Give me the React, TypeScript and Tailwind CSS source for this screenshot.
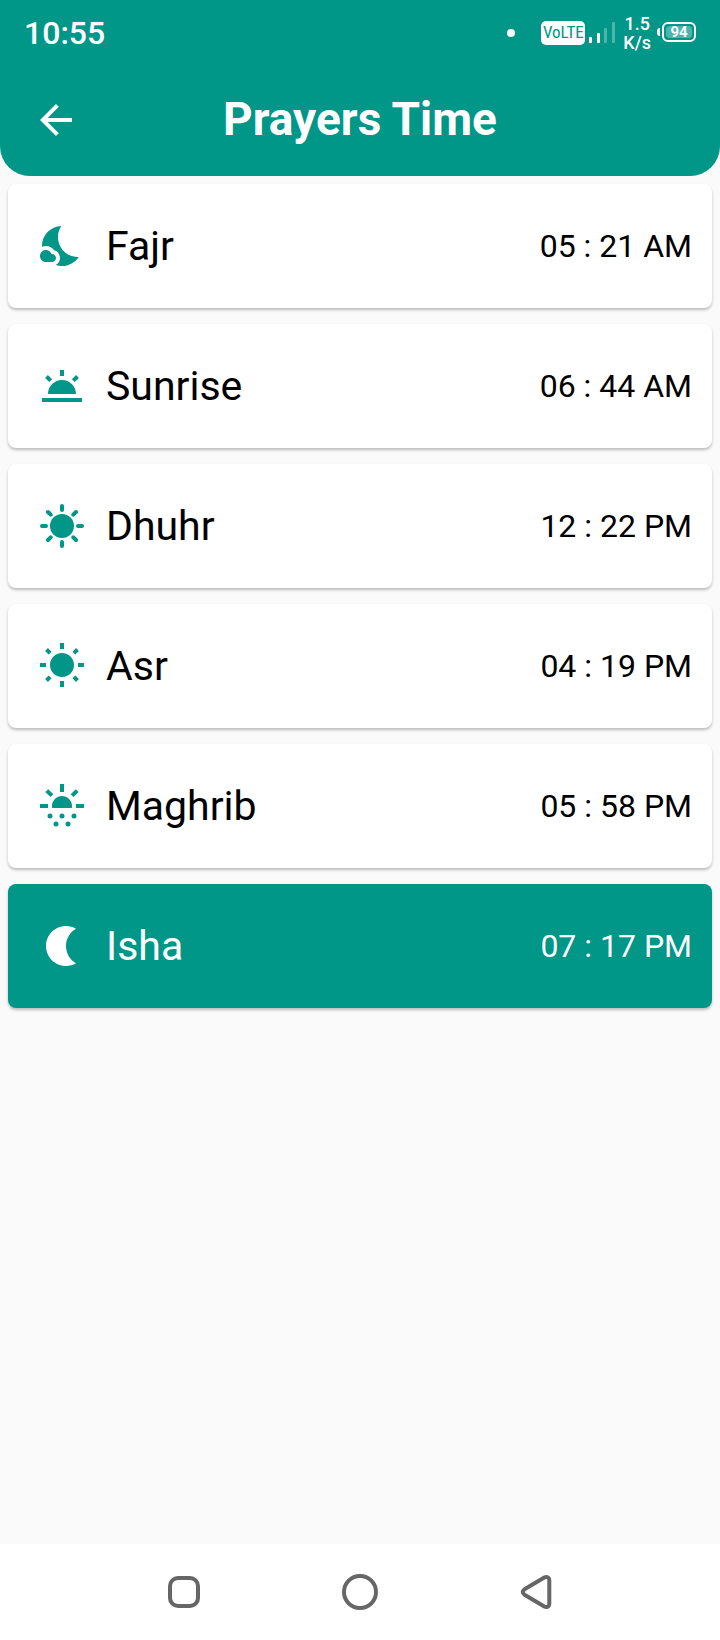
import type { ReactNode } from "react";

type Prayer = { name: string; time: string; icon: ReactNode; active?: boolean };

function Icon({ children }: { children: ReactNode }) {
  return (
    <svg viewBox="0 0 24 24" className="size-12 shrink-0" fill="currentColor" aria-hidden="true">
      {children}
    </svg>
  );
}

const prayers: Prayer[] = [
  {
    name: "Fajr",
    time: "05 : 21 AM",
    icon: (
      <Icon>
        <path d="M11.1 12.08C8.77 7.57 10.6 3.6 11.63 2.01 6.27 2.2 1.98 6.59 1.98 12c0 .14.02.28.02.42C2.62 12.15 3.29 12 4 12c1.66 0 3.18.83 4.1 2.15C9.77 14.63 11 16.17 11 18c0 1.52-.87 2.83-2.12 3.51.98.32 2.03.5 3.11.5 3.5 0 6.58-1.8 8.37-4.52-2.36.23-6.98-.97-9.26-5.41z" />
        <path d="M7 16h-.18C6.4 14.84 5.3 14 4 14c-1.66 0-3 1.34-3 3s1.34 3 3 3h3c1.1 0 2-.9 2-2s-.9-2-2-2z" />
      </Icon>
    ),
  },
  {
    name: "Sunrise",
    time: "06 : 44 AM",
    icon: (
      <Icon>
        <path d="M2 18h20v2H2zM11 4h2v3h-2zM5 16h14c0-3.87-3.13-7-7-7s-7 3.13-7 7z" />
        <path d="M4.25 7.25l2.1 2.1M19.75 7.25l-2.1 2.1" stroke="currentColor" strokeWidth="2" />
      </Icon>
    ),
  },
  {
    name: "Dhuhr",
    time: "12 : 22 PM",
    icon: (
      <Icon>
        <circle cx="12" cy="12" r="6" />
        <path
          d="M12 2v2M12 20v2M2 12h2M20 12h2M5 5l1.35 1.35M19 5l-1.35 1.35M5 19l1.35-1.35M19 19l-1.35-1.35"
          stroke="currentColor"
          strokeWidth="2"
          strokeLinecap="round"
        />
      </Icon>
    ),
  },
  {
    name: "Asr",
    time: "04 : 19 PM",
    icon: (
      <Icon>
        <path d="M6.76 4.84l-1.8-1.79-1.41 1.41 1.79 1.79 1.42-1.41zM4 10.5H1v2h3v-2zm9-9.95h-2V3.5h2V.55zm7.45 3.91l-1.41-1.41-1.79 1.79 1.41 1.41 1.79-1.79zm-3.21 13.7l1.79 1.8 1.41-1.41-1.8-1.79-1.4 1.4zM20 10.5v2h3v-2h-3zm-8-5c-3.31 0-6 2.69-6 6s2.69 6 6 6 6-2.69 6-6-2.69-6-6-6zm-1 16.95h2V19.5h-2v2.95zm-7.45-3.91l1.41 1.41 1.79-1.8-1.41-1.41-1.79 1.8z" />
      </Icon>
    ),
  },
  {
    name: "Maghrib",
    time: "05 : 58 PM",
    icon: (
      <Icon>
        <path d="M11 1h2v4h-2zM1 11h4v2H1zM19 11h4v2h-4zM7.1 13h9.8c.07-.32.1-.66.1-1 0-2.76-2.24-5-5-5s-5 2.24-5 5c0 .34.03.68.1 1z" />
        <path d="M4.4 4.3l2.55 2.55M19.6 4.3l-2.55 2.55" stroke="currentColor" strokeWidth="2" />
        <circle cx="6" cy="17" r="1.25" />
        <circle cx="12" cy="17" r="1.25" />
        <circle cx="18" cy="17" r="1.25" />
        <circle cx="9" cy="21" r="1.25" />
        <circle cx="15" cy="21" r="1.25" />
      </Icon>
    ),
  },
  {
    name: "Isha",
    time: "07 : 17 PM",
    active: true,
    icon: (
      <Icon>
        <path d="M14 2c1.82 0 3.53.5 5 1.35-2.99 1.73-5 4.95-5 8.65s2.01 6.92 5 8.65C17.53 21.5 15.82 22 14 22 8.48 22 4 17.52 4 12S8.48 2 14 2z" />
      </Icon>
    ),
  },
];

function StatusBar() {
  return (
    <div className="flex h-16 items-center justify-between px-6 pt-0.5">
      <span className="text-[32px] leading-9 font-medium">10:55</span>
      <div className="flex items-center">
        <span className="mr-[26px] size-2 rounded-full bg-white" />
        <span className="mr-1 flex h-6 w-11 items-center justify-center rounded-[5px] bg-white font-['Roboto_Condensed','Liberation_Sans_Narrow','Roboto',sans-serif] text-[17px] text-[#009688]">
          VoLTE
        </span>
        <svg viewBox="0 0 26 22" className="mr-2 h-[22px] w-[26px]" fill="currentColor" aria-hidden="true">
          <rect x="0" y="15" width="3" height="6" rx="1" />
          <rect x="8" y="11" width="3" height="10" rx="1" />
          <rect x="15" y="6" width="3" height="15" rx="1" opacity=".3" />
          <rect x="23" y="0" width="3" height="21" rx="1" opacity=".3" />
        </svg>
        <span className="mr-1.5 text-center text-[18px] leading-[19px] font-medium">
          1.5
          <br />
          K/s
        </span>
        <span className="mr-0.5 mb-0.5 h-2 w-[3px] rounded-l-sm bg-white" />
        <span className="mb-0.5 flex h-5 w-[34px] rounded-md border-2 border-white p-0.5">
          <span className="flex flex-1 items-center justify-center rounded-sm bg-white/30 text-[15px] leading-none font-bold">
            94
          </span>
        </span>
      </div>
    </div>
  );
}

function AppBar() {
  return (
    <div className="grid h-28 grid-cols-[48px_1fr_48px] items-center px-8">
      <button type="button" aria-label="Back" className="size-12">
        <svg viewBox="0 0 24 24" className="size-12" fill="currentColor" aria-hidden="true">
          <path d="M20 11H7.83l5.59-5.59L12 4l-8 8 8 8 1.41-1.41L7.83 13H20v-2z" />
        </svg>
      </button>
      <h1 className="pb-0.5 text-center text-[46px] leading-none font-bold">Prayers Time</h1>
    </div>
  );
}

function PrayerCard({ prayer }: { prayer: Prayer }) {
  return (
    <li
      className={
        prayer.active
          ? "flex h-[124px] items-center rounded-lg bg-[#009688] pr-5 pl-[30px] text-white shadow-[0_2px_3px_rgba(0,0,0,0.25)]"
          : "flex h-[124px] items-center rounded-lg bg-white pr-5 pl-[30px] text-black shadow-[0_2px_3px_rgba(0,0,0,0.25)]"
      }
    >
      <span className={prayer.active ? "text-white" : "text-[#009688]"}>{prayer.icon}</span>
      <span className="ml-5 flex-1 text-[41px] leading-none">{prayer.name}</span>
      <time className="text-[32px] leading-none">{prayer.time}</time>
    </li>
  );
}

function NavBar() {
  return (
    <nav className="flex h-24 items-center justify-center gap-32 bg-white text-[#666666]">
      <button type="button" aria-label="Recent apps" className="size-12">
        <svg viewBox="0 0 48 48" fill="none" stroke="currentColor" strokeWidth="4" aria-hidden="true">
          <rect x="10" y="10" width="28" height="28" rx="8" />
        </svg>
      </button>
      <button type="button" aria-label="Home" className="size-12">
        <svg viewBox="0 0 48 48" fill="none" stroke="currentColor" strokeWidth="4" aria-hidden="true">
          <circle cx="24" cy="24" r="16" />
        </svg>
      </button>
      <button type="button" aria-label="Back" className="size-12">
        <svg viewBox="0 0 48 48" fill="none" stroke="currentColor" strokeWidth="4" strokeLinejoin="round" aria-hidden="true">
          <path d="M12.5 21.3L32.3 9.5C34.8 8.2 37.3 9.5 37.3 12V36C37.3 38.5 34.8 39.8 32.3 38.5L12.5 26.7Q9 24 12.5 21.3Z" />
        </svg>
      </button>
    </nav>
  );
}

export default function App() {
  return (
    <div className="flex min-h-screen flex-col bg-[#fafafa] font-['Roboto',sans-serif]">
      <header className="rounded-b-[30px] bg-[#009688] text-white">
        <StatusBar />
        <AppBar />
      </header>
      <main className="flex-1 p-2">
        <ul className="flex flex-col gap-4">
          {prayers.map((prayer) => (
            <PrayerCard key={prayer.name} prayer={prayer} />
          ))}
        </ul>
      </main>
      <NavBar />
    </div>
  );
}
